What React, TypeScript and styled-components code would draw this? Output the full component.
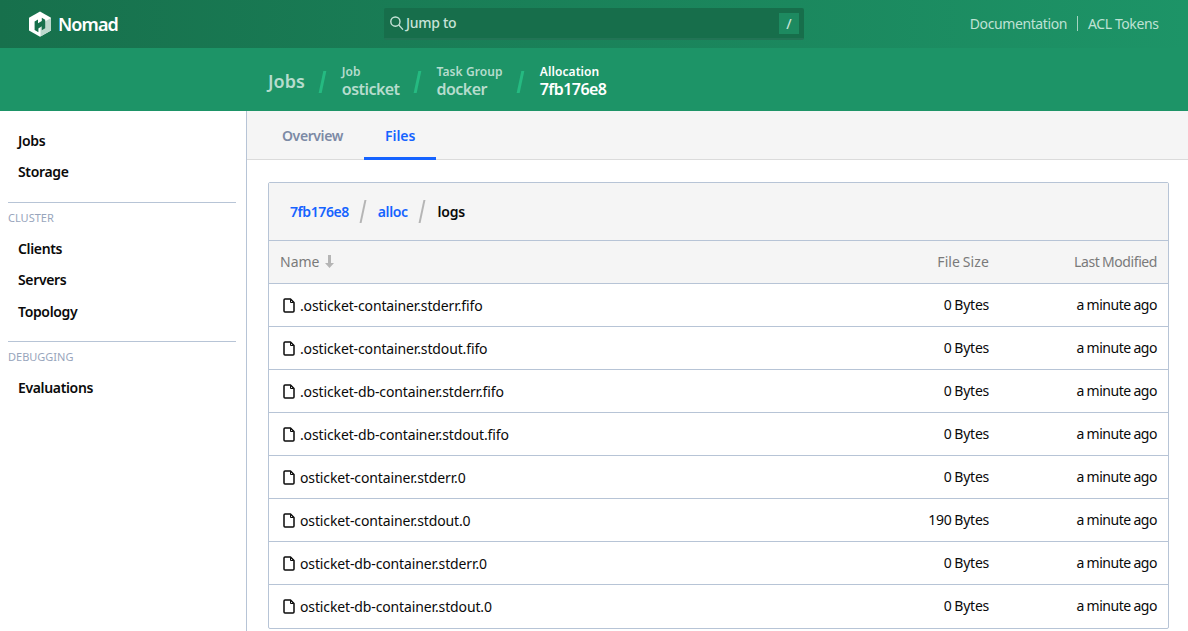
import React from "react";
import styled, { createGlobalStyle } from "styled-components";

const Global = createGlobalStyle`
  html, body { margin: 0; padding: 0; height: 100%; overflow: hidden; background: #fff; }
  body { font-family: "Noto Sans", "Liberation Sans", sans-serif; font-size: 14px; color: #0a0a0a; }
  * { box-sizing: border-box; }
`;

const Page = styled.div`
  width: 1188px;
  height: 631px;
  overflow: hidden;
  display: flex;
  flex-direction: column;
`;

const TopBar = styled.header`
  height: 48px;
  flex: none;
  background: linear-gradient(90deg, #17704c 0%, #1d9467 100%);
  display: grid;
  grid-template-columns: 384px 420px 1fr;
  align-items: center;
`;

const Brand = styled.div`
  display: flex;
  align-items: center;
  gap: 6px;
  padding-left: 28px;
  color: #fff;
  font-size: 18px;
  font-weight: 600;
  letter-spacing: -0.9px;
`;

const Search = styled.div`
  height: 32px;
  background: #176e4b;
  border-radius: 2px;
  border-bottom: 2px solid #227455;
  display: flex;
  align-items: center;
  padding: 0 5px;
  color: #c7e3d8;
  font-size: 14px;
  font-weight: 500;
`;

const SearchLabel = styled.span`
  flex: 1;
  letter-spacing: -0.3px;
  margin-bottom: 1px;
`;

const SlashKey = styled.span`
  width: 20px;
  height: 21px;
  background: #1d8a60;
  color: #c7e3d8;
  display: flex;
  align-items: center;
  justify-content: center;
  font-size: 14px;
`;

const TopLinks = styled.nav`
  display: flex;
  justify-content: flex-end;
  align-items: center;
  padding: 0 29.5px 2px 0;
  color: #bfe2d4;
  font-size: 14px;
  letter-spacing: -0.4px;
`;

const TopLink = styled.a<{ $divided?: boolean }>`
  line-height: 15px;
  ${(p) => p.$divided && `border-left: 1px solid #a5d4c1; margin-left: 10px; padding-left: 10px;`}
`;

const CrumbBar = styled.div`
  height: 63px;
  flex: none;
  background: #1d9467;
  padding-left: 268px;
  display: flex;
  align-items: center;
`;

const CrumbRoot = styled.span`
  color: #b6dccd;
  font-size: 18px;
  font-weight: 600;
  margin-top: 2px;
`;

const CrumbSep = styled.span`
  width: 3px;
  height: 22px;
  margin: 4px 17.5px 0 16.5px;
  background: #25ba81;
  transform: skewX(-12deg);
`;

const Crumb = styled.div<{ $active?: boolean }>`
  display: flex;
  flex-direction: column;
  margin-top: 3.4px;
  color: ${(p) => (p.$active ? "#fff" : "#b6dccd")};
  font-weight: 600;
`;

const CrumbLabel = styled.span`
  font-size: 12px;
  line-height: 16px;
  letter-spacing: 0.1px;
`;

const CrumbValue = styled.span`
  font-size: 16px;
  line-height: 18px;
  letter-spacing: -0.55px;
`;

const Body = styled.div`
  flex: 1;
  display: flex;
  min-height: 0;
`;

const Sidebar = styled.aside`
  width: 247px;
  flex: none;
  border-right: 1px solid #b7c4d6;
  padding: 13.7px 10px 0 8px;
`;

const NavItem = styled.div`
  height: 31.5px;
  padding-left: 10px;
  display: flex;
  align-items: center;
  font-weight: 600;
  font-size: 14px;
  letter-spacing: -0.35px;
  color: #0a0a0a;
`;

const NavGroupLabel = styled.div`
  border-top: 1px solid #b7c4d6;
  margin-top: 14px;
  padding-top: 7px;
  font-size: 11px;
  line-height: 15px;
  color: #98a5bc;
  height: 31px;
`;

const Main = styled.main`
  flex: 1;
  min-width: 0;
`;

const Tabs = styled.div`
  height: 49px;
  background: #f5f5f5;
  border-bottom: 1px solid #dbdbdb;
  display: flex;
  padding-left: 14px;
`;

const Tab = styled.div<{ $active?: boolean }>`
  height: 49px;
  padding: 3px 21px 0;
  display: flex;
  align-items: center;
  font-weight: 600;
  font-size: 14px;
  letter-spacing: ${(p) => (p.$active ? "0" : "-0.4px")};
  color: ${(p) => (p.$active ? "#1563ff" : "#7c8aa5")};
  border-bottom: 3px solid ${(p) => (p.$active ? "#1563ff" : "transparent")};
`;

const Section = styled.section`
  padding: 22px 19px 0 21px;
`;

const Box = styled.div`
  border: 1px solid #b7c4d6;
  border-radius: 2px;
`;

const PathBar = styled.div`
  height: 57px;
  background: #f5f5f5;
  display: flex;
  align-items: center;
  padding-left: 21px;
  font-weight: 600;
  font-size: 14px;
  letter-spacing: -0.42px;
`;

const PathLink = styled.a`
  color: #1563ff;
`;

const PathCurrent = styled.span`
  color: #0a0a0a;
  margin-left: 1px;
  letter-spacing: -0.2px;
`;

const PathSep = styled.span`
  width: 2px;
  height: 23px;
  margin: 0 13.5px;
  background: #b5b5b5;
  transform: skewX(-12deg);
`;

const Table = styled.table`
  width: 100%;
  border-collapse: collapse;
  table-layout: fixed;
`;

const HeadCell = styled.th<{ $w?: number; $right?: boolean; $ls?: number; $ws?: number }>`
  height: 43px;
  background: #f5f5f5;
  border-top: 1px solid #b7c4d6;
  padding: 0 11px 2px;
  font-size: 14px;
  font-weight: 400;
  color: #7a7a7a;
  letter-spacing: ${(p) => p.$ls ?? 0}px;
  word-spacing: ${(p) => p.$ws ?? 0}px;
  text-align: ${(p) => (p.$right ? "right" : "left")};
  ${(p) => p.$w && `width: ${p.$w}px;`}
`;

const NameCell = styled.td`
  height: 43px;
  border-top: 1px solid #b7c4d6;
  padding: 2px 11px 0;
  font-size: 14px;
  color: #0a0a0a;
  white-space: nowrap;
  letter-spacing: -0.13px;
`;

const ValueCell = styled.td<{ $ls?: number }>`
  height: 43px;
  border-top: 1px solid #b7c4d6;
  padding: 0 11px 2px;
  font-size: 14px;
  color: #0a0a0a;
  white-space: nowrap;
  text-align: right;
  word-spacing: -0.5px;
  letter-spacing: ${(p) => p.$ls ?? 0}px;
`;

const FileName = styled.span`
  display: inline-flex;
  align-items: center;
  gap: 5px;
  padding-left: 3px;
`;

const SortIcon = styled.svg`
  margin-left: 6px;
  vertical-align: -1px;
`;

const Logo = () => (
  <svg width="24" height="26" viewBox="0 0 24 26" aria-hidden="true">
    <path d="M12 0.5 23 6.8V19.4L12 25.7 1 19.4V6.8Z" fill="#fff" />
    <path d="M12.5 13 23 7V19.4L12.5 25.5Z" fill="#bdd8cd" />
    <path d="M6.6 10.6 10 8.6v3.6l3.8-2.3V6.8l3.4 2v8.4l-3.4 2v-3.9L10.4 17.4v3.8L6.6 19Z" fill="#17704c" />
  </svg>
);

const SearchIcon = () => (
  <svg width="17" height="17" viewBox="0 0 17 17" fill="none" stroke="#c7e3d8" strokeWidth="1.4" aria-hidden="true">
    <circle cx="6.4" cy="6.6" r="4.6" />
    <path d="M9.8 10 14 14.6" />
  </svg>
);

const FileIcon = () => (
  <svg width="12" height="15" viewBox="0 0 12 15" fill="none" stroke="#0a0a0a" strokeWidth="1.5" strokeLinejoin="round" aria-hidden="true">
    <path d="M1 2a1 1 0 0 1 1-1h5.5L11 4.5V13a1 1 0 0 1-1 1H2a1 1 0 0 1-1-1Z" />
    <path d="M7.5 1.5v3H10.5" strokeWidth="1" />
  </svg>
);

const files: [string, string][] = [
  [".osticket-container.stderr.fifo", "0 Bytes"],
  [".osticket-container.stdout.fifo", "0 Bytes"],
  [".osticket-db-container.stderr.fifo", "0 Bytes"],
  [".osticket-db-container.stdout.fifo", "0 Bytes"],
  ["osticket-container.stderr.0", "0 Bytes"],
  ["osticket-container.stdout.0", "190 Bytes"],
  ["osticket-db-container.stderr.0", "0 Bytes"],
  ["osticket-db-container.stdout.0", "0 Bytes"],
];

export default function App() {
  return (
    <Page>
      <Global />
      <TopBar>
        <Brand>
          <Logo />
          Nomad
        </Brand>
        <Search>
          <SearchIcon />
          <SearchLabel>Jump to</SearchLabel>
          <SlashKey>/</SlashKey>
        </Search>
        <TopLinks>
          <TopLink>Documentation</TopLink>
          <TopLink $divided>ACL Tokens</TopLink>
        </TopLinks>
      </TopBar>
      <CrumbBar>
        <CrumbRoot>Jobs</CrumbRoot>
        <CrumbSep />
        <Crumb>
          <CrumbLabel>Job</CrumbLabel>
          <CrumbValue>osticket</CrumbValue>
        </Crumb>
        <CrumbSep />
        <Crumb>
          <CrumbLabel>Task Group</CrumbLabel>
          <CrumbValue>docker</CrumbValue>
        </Crumb>
        <CrumbSep />
        <Crumb $active>
          <CrumbLabel>Allocation</CrumbLabel>
          <CrumbValue>7fb176e8</CrumbValue>
        </Crumb>
      </CrumbBar>
      <Body>
        <Sidebar>
          <NavItem>Jobs</NavItem>
          <NavItem>Storage</NavItem>
          <NavGroupLabel>CLUSTER</NavGroupLabel>
          <NavItem>Clients</NavItem>
          <NavItem>Servers</NavItem>
          <NavItem>Topology</NavItem>
          <NavGroupLabel>DEBUGGING</NavGroupLabel>
          <NavItem>Evaluations</NavItem>
        </Sidebar>
        <Main>
          <Tabs>
            <Tab>Overview</Tab>
            <Tab $active>Files</Tab>
          </Tabs>
          <Section>
            <Box>
              <PathBar>
                <PathLink>7fb176e8</PathLink>
                <PathSep />
                <PathLink>alloc</PathLink>
                <PathSep />
                <PathCurrent>logs</PathCurrent>
              </PathBar>
              <Table>
                <thead>
                  <tr>
                    <HeadCell>
                      Name
                      <SortIcon width="9" height="13" viewBox="0 0 9 13" aria-hidden="true">
                        <path d="M3 0h3v8h3L4.5 13 0 8h3Z" fill="#b5b5b5" />
                      </SortIcon>
                    </HeadCell>
                    <HeadCell $right $w={200} $ws={-1} $ls={0.1}>File Size</HeadCell>
                    <HeadCell $right $w={168} $ws={-0.5} $ls={-0.42}>Last Modified</HeadCell>
                  </tr>
                </thead>
                <tbody>
                  {files.map(([name, size]) => (
                    <tr key={name}>
                      <NameCell>
                        <FileName>
                          <FileIcon />
                          {name}
                        </FileName>
                      </NameCell>
                      <ValueCell $ls={-0.25}>{size}</ValueCell>
                      <ValueCell $ls={-0.46}>a minute ago</ValueCell>
                    </tr>
                  ))}
                </tbody>
              </Table>
            </Box>
          </Section>
        </Main>
      </Body>
    </Page>
  );
}
